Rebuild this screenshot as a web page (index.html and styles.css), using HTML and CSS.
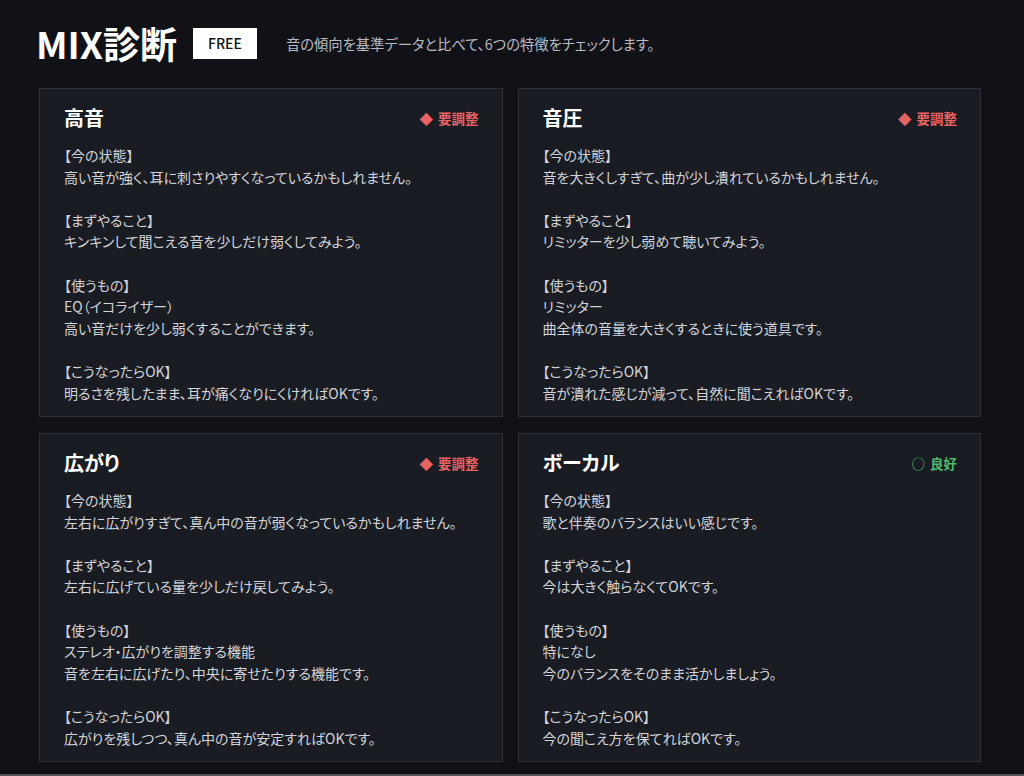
FILE: index.html
```
<!DOCTYPE html>
<html lang="ja">
<head>
    <meta charset="UTF-8">
    <meta name="viewport" content="width=device-width, initial-scale=1.0">
    <title>MIX診断</title>
    <link rel="stylesheet" href="styles.css">
</head>
<body>
    <div class="page">
        <div class="header">
            <h1>MIX診断</h1>
            <span class="free">FREE</span>
            <p class="lead">音の傾向を基準データと比べて、6つの特徴をチェックします。</p>
        </div>

        <div class="cards">
            <div class="card">
                <div class="card-head">
                    <h2>高音</h2>
                    <span class="status bad"><span class="mark">◆</span>要調整</span>
                </div>
                <div class="block">
                    <p>【今の状態】</p>
                    <p>高い音が強く、耳に刺さりやすくなっているかもしれません。</p>
                </div>
                <div class="block">
                    <p>【まずやること】</p>
                    <p>キンキンして聞こえる音を少しだけ弱くしてみよう。</p>
                </div>
                <div class="block">
                    <p>【使うもの】</p>
                    <p>EQ（イコライザー）</p>
                    <p>高い音だけを少し弱くすることができます。</p>
                </div>
                <div class="block">
                    <p>【こうなったらOK】</p>
                    <p>明るさを残したまま、耳が痛くなりにくければOKです。</p>
                </div>
            </div>

            <div class="card">
                <div class="card-head">
                    <h2>音圧</h2>
                    <span class="status bad"><span class="mark">◆</span>要調整</span>
                </div>
                <div class="block">
                    <p>【今の状態】</p>
                    <p>音を大きくしすぎて、曲が少し潰れているかもしれません。</p>
                </div>
                <div class="block">
                    <p>【まずやること】</p>
                    <p>リミッターを少し弱めて聴いてみよう。</p>
                </div>
                <div class="block">
                    <p>【使うもの】</p>
                    <p>リミッター</p>
                    <p>曲全体の音量を大きくするときに使う道具です。</p>
                </div>
                <div class="block">
                    <p>【こうなったらOK】</p>
                    <p>音が潰れた感じが減って、自然に聞こえればOKです。</p>
                </div>
            </div>

            <div class="card">
                <div class="card-head">
                    <h2>広がり</h2>
                    <span class="status bad"><span class="mark">◆</span>要調整</span>
                </div>
                <div class="block">
                    <p>【今の状態】</p>
                    <p>左右に広がりすぎて、真ん中の音が弱くなっているかもしれません。</p>
                </div>
                <div class="block">
                    <p>【まずやること】</p>
                    <p>左右に広げている量を少しだけ戻してみよう。</p>
                </div>
                <div class="block">
                    <p>【使うもの】</p>
                    <p>ステレオ・広がりを調整する機能</p>
                    <p>音を左右に広げたり、中央に寄せたりする機能です。</p>
                </div>
                <div class="block">
                    <p>【こうなったらOK】</p>
                    <p>広がりを残しつつ、真ん中の音が安定すればOKです。</p>
                </div>
            </div>

            <div class="card">
                <div class="card-head">
                    <h2>ボーカル</h2>
                    <span class="status good"><span class="mark">○</span>良好</span>
                </div>
                <div class="block">
                    <p>【今の状態】</p>
                    <p>歌と伴奏のバランスはいい感じです。</p>
                </div>
                <div class="block">
                    <p>【まずやること】</p>
                    <p>今は大きく触らなくてOKです。</p>
                </div>
                <div class="block">
                    <p>【使うもの】</p>
                    <p>特になし</p>
                    <p>今のバランスをそのまま活かしましょう。</p>
                </div>
                <div class="block">
                    <p>【こうなったらOK】</p>
                    <p>今の聞こえ方を保てればOKです。</p>
                </div>
            </div>
        </div>
    </div>
</body>
</html>
```

FILE: styles.css
```
* {
    margin: 0;
    padding: 0;
    box-sizing: border-box;
}
body {
    background: #111218;
    color: #e6e6e6;
    font-family: "Noto Sans CJK JP", "Noto Sans", sans-serif;
    font-feature-settings: "palt";
    height: 776px;
    overflow: hidden;
    border-bottom: 2px solid #505257;
}
.page {
    padding: 18px 43px 0 39px;
}
.header {
    display: flex;
    align-items: center;
    height: 50px;
    margin-bottom: 20px;
}
.header h1 {
    font-size: 37px;
    font-weight: 700;
    color: #fff;
    margin-left: -3px;
}
.free {
    background: #fff;
    color: #111;
    font-size: 14px;
    font-weight: 500;
    padding: 5px 15px;
    margin-left: 16px;
    line-height: 21px;
}
.lead {
    font-size: 14.3px;
    color: #b9bbc2;
    margin-left: 29px;
}
.cards {
    display: grid;
    grid-template-columns: 1fr 1fr;
    grid-auto-rows: 329px;
    gap: 16px 15px;
}
.card {
    background: #1a1c23;
    border: 1px solid #2d3039;
    padding: 16px 23px 0 24px;
}
.card-head {
    display: flex;
    justify-content: space-between;
    align-items: center;
    margin-bottom: 14px;
}
.card-head h2 {
    font-size: 20px;
    font-weight: 700;
    color: #fff;
    line-height: 26px;
}
.status {
    font-size: 13.5px;
    font-weight: 700;
}
.status .mark {
    margin-right: 5px;
}
.status.bad {
    color: #e86464;
}
.status.good {
    color: #4fb86d;
}
.block {
    margin-bottom: 21.6px;
}
.block p {
    font-size: 14px;
    line-height: 21.6px;
    color: #d2d4da;
}
```
